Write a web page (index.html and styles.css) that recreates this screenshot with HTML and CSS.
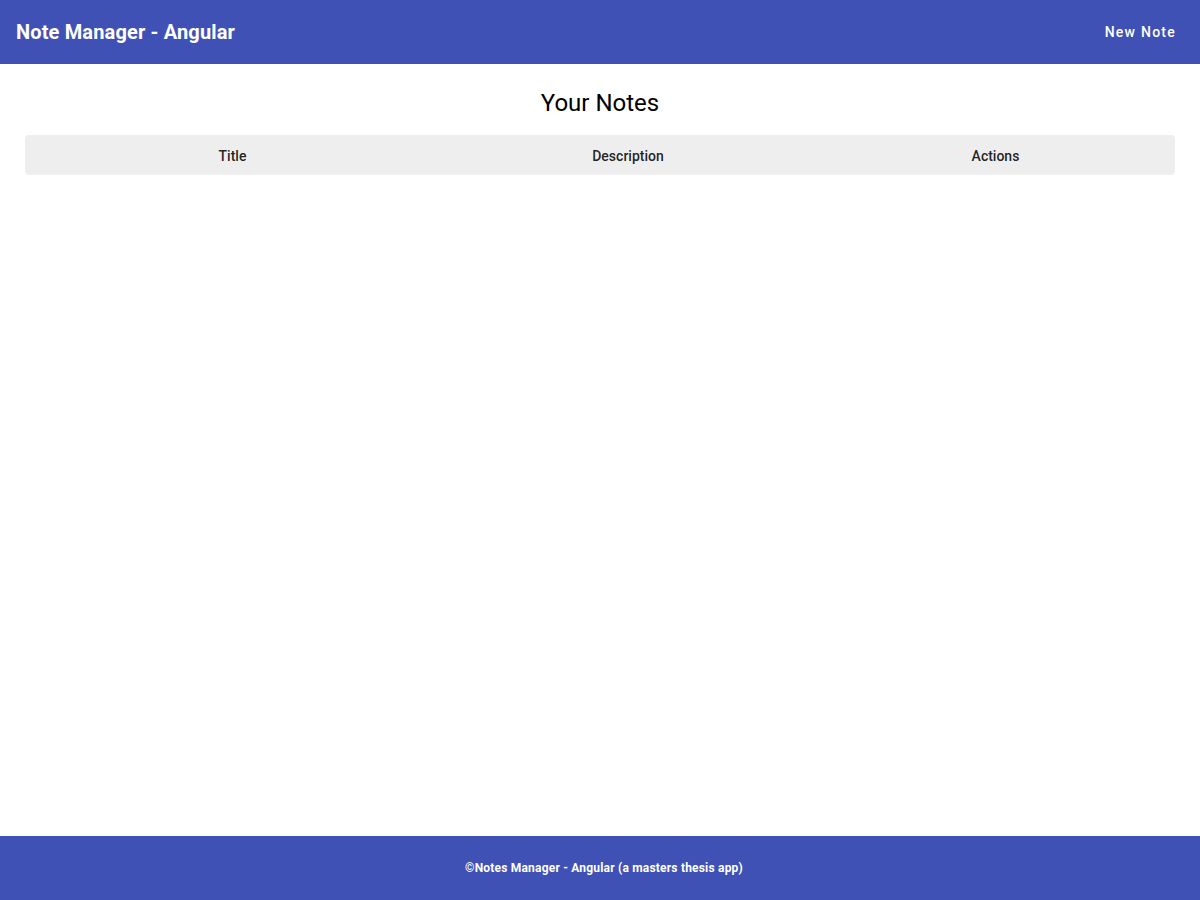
FILE: index.html
```html
<!DOCTYPE html>
<html lang="en">
<head>
<meta charset="utf-8">
<title>Note Manager - Angular</title>
<link rel="stylesheet" href="styles.css">
</head>
<body>
<div class="app">
  <header class="toolbar">
    <span class="brand">Note Manager - Angular</span>
    <button class="nav-btn">New Note</button>
  </header>
  <main class="content">
    <h1 class="heading">Your Notes</h1>
    <table class="notes-table">
      <thead>
        <tr>
          <th class="col-title">Title</th>
          <th class="col-desc">Description</th>
          <th class="col-actions">Actions</th>
        </tr>
      </thead>
    </table>
  </main>
  <footer class="footer">©Notes Manager - Angular (a masters thesis app)</footer>
</div>
</body>
</html>
```

FILE: styles.css
```css
* { box-sizing: border-box; }
html, body { margin: 0; padding: 0; height: 100%; }
body {
  font-family: Roboto, "Helvetica Neue", sans-serif;
  color: #000;
  background: #fff;
}
.app {
  display: flex;
  flex-direction: column;
  min-height: 100vh;
}
.toolbar {
  height: 64px;
  background: #3f51b5;
  color: #fff;
  display: flex;
  align-items: center;
  justify-content: space-between;
  padding: 0 16px;
}
.brand {
  font-size: 20px;
  font-weight: 700;
  letter-spacing: 0.15px;
}
.nav-btn {
  background: transparent;
  border: none;
  color: #fff;
  font-family: Roboto, sans-serif;
  font-size: 14px;
  font-weight: 500;
  letter-spacing: 1.25px;
  padding: 0 8px 0 16px;
  height: 36px;
  cursor: pointer;
}
.content {
  flex: 1;
  padding: 0 25px;
}
.heading {
  text-align: center;
  font-size: 24px;
  font-weight: 400;
  margin: 24px 0 17px;
  line-height: 30px;
}
.notes-table {
  width: 100%;
  border-collapse: separate;
  border-spacing: 0;
  table-layout: fixed;
}
.notes-table th {
  background: #eeeeee;
  height: 40px;
  font-size: 14px;
  font-weight: 500;
  color: rgba(0, 0, 0, 0.87);
  text-align: center;
  padding: 1px 0 0;
}
.col-title { width: 415px; border-radius: 4px 0 0 4px; }
.col-desc { width: 376px; }
.col-actions { border-radius: 0 4px 4px 0; }
.footer {
  height: 64px;
  background: #3f51b5;
  color: #fff;
  font-size: 12px;
  font-weight: 700;
  letter-spacing: 0.2px;
  display: flex;
  align-items: center;
  justify-content: center;
  padding-left: 8px;
}
```
